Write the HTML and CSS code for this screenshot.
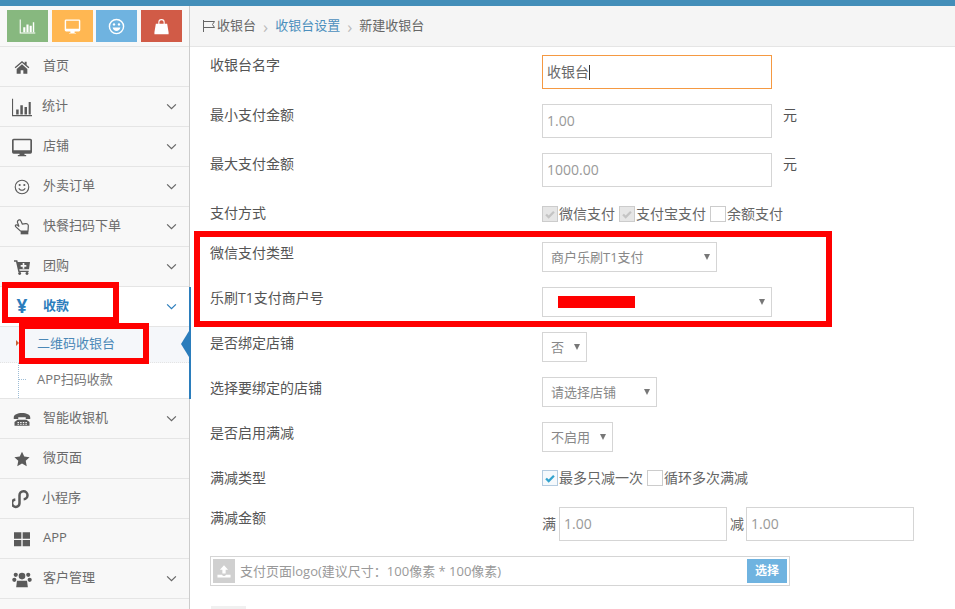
FILE: index.html
```html
<!DOCTYPE html>
<html lang="zh">
<head>
<meta charset="utf-8">
<title>新建收银台</title>
<link rel="stylesheet" href="styles.css">
</head>
<body>
<div class="topbar"></div>
<div class="layout">
  <aside class="sidebar">
    <div class="shortcuts">
      <span class="sc sc-green"><svg viewBox="0 0 24 24" class="sc-ic"><path d="M1 2v20h22v-1.500H2.500V2z"/><path d="M6 13h3v7H6zM10.500 9h3v11h-3zM15 11h3v9h-3zM19.500 6h2v14h-2z"/></svg></span>
      <span class="sc sc-orange"><svg viewBox="0 0 24 24" class="sc-ic"><path d="M3 2h18a2 2 0 0 1 2 2v13a2 2 0 0 1-2 2h-6v2h2v1H7v-1h2v-2H3a2 2 0 0 1-2-2V4a2 2 0 0 1 2-2zm0 2v11h18V4z"/></svg></span>
      <span class="sc sc-blue"><svg viewBox="0 0 24 24" class="sc-ic"><path fill-rule="evenodd" d="M12 1a11 11 0 1 1 0 22 11 11 0 0 1 0-22zm0 2a9 9 0 1 0 0 18 9 9 0 0 0 0-18z"/><circle cx="8.500" cy="9" r="1.700"/><circle cx="15.500" cy="9" r="1.700"/><path d="M6.500 13.500h11c-.5 3-3 4.800-5.500 4.800s-5-1.800-5.500-4.800z"/></svg></span>
      <span class="sc sc-red"><svg viewBox="0 0 24 24" class="sc-ic"><path fill-rule="evenodd" d="M7.500 8V6a4.500 4.500 0 0 1 9 0v2H20l2 12v3H2v-3L4 8zm1.500 0h6V6a3 3 0 0 0-6 0z"/></svg></span>
    </div>
    <nav>
      <a class="item"><svg class="ic ic-s" viewBox="0 0 24 24"><path d="M12 3 1 12.500l1.300 1.500L12 5.700l9.700 8.300 1.300-1.500-4-3.500V4h-3v2.400zM4 15v7h6v-5h4v5h6v-7l-8-7z"/></svg><span class="lbl">首页</span></a>
      <a class="item"><svg class="ic" viewBox="0 0 24 24"><path d="M0 2h1.300v19.500H24V23H0z"/><path d="M5 15h3v6H5zM10 10h3v11h-3zM15 12h3v9h-3zM20 6h2.500v15H20z"/></svg><span class="lbl lbl-tight">统计</span><svg class="chev" viewBox="0 0 12 8"><path d="m1 1.500 5 5 5-5"/></svg></a>
      <a class="item"><svg class="ic" viewBox="0 0 24 24"><path fill-rule="evenodd" d="M2 2h20a2 2 0 0 1 2 2v14a2 2 0 0 1-2 2h-7v1.500h2V23H7v-1.500h2V20H2a2 2 0 0 1-2-2V4a2 2 0 0 1 2-2zm0 2v12h20V4z"/></svg><span class="lbl">店铺</span><svg class="chev" viewBox="0 0 12 8"><path d="m1 1.500 5 5 5-5"/></svg></a>
      <a class="item"><svg class="ic ic-s" viewBox="0 0 24 24"><path fill-rule="evenodd" d="M12 1a11 11 0 1 1 0 22 11 11 0 0 1 0-22zm0 1.700a9.300 9.300 0 1 0 0 18.600 9.300 9.300 0 0 0 0-18.600z"/><circle cx="8.500" cy="9" r="1.600"/><circle cx="15.500" cy="9" r="1.600"/><path d="M6.500 14.200l1.500-.7c.8 1.600 2.400 2.500 4 2.500s3.200-.9 4-2.500l1.500.7c-1 2.300-3.200 3.600-5.500 3.600s-4.500-1.300-5.500-3.600z"/></svg><span class="lbl">外卖订单</span><svg class="chev" viewBox="0 0 12 8"><path d="m1 1.500 5 5 5-5"/></svg></a>
      <a class="item"><svg class="ic ic-s" viewBox="0 0 24 24"><path class="hand" d="M7 1.500c1.300-.8 2.700 0 3.200 1.200l2.300 4.800 5-.5c2.300-.2 4 1 4 3.200l-.5 7.800H9.500L2.500 11.500c-.8-1-.5-2 .2-2.500s1.800-.3 2.800.5l2 1.800-2.300-6.300C4.800 3.500 5.800 2.300 7 1.500z"/><path d="M10 18h11.500v5H10z"/></svg><span class="lbl">快餐扫码下单</span><svg class="chev" viewBox="0 0 12 8"><path d="m1 1.500 5 5 5-5"/></svg></a>
      <a class="item"><svg class="ic ic-s" viewBox="0 0 24 24"><path fill-rule="evenodd" d="M0 2h5l.7 2.500H24l-1.500 11H8l.4 2H22v2H6.500L3 4H0zm13 4v3h-3v2.500h3v3h2.500v-3h3V9h-3V6z"/><circle cx="8.500" cy="21.700" r="2.200"/><circle cx="19.500" cy="21.700" r="2.200"/></svg><span class="lbl">团购</span><svg class="chev" viewBox="0 0 12 8"><path d="m1 1.500 5 5 5-5"/></svg></a>
      <a class="item active"><span class="yen">¥</span><span class="lbl">收款</span><svg class="chev" viewBox="0 0 12 8"><path d="m1 1.500 5 5 5-5"/></svg></a>
      <div class="sub">
        <a class="sub-item current">二维码收银台</a>
        <a class="sub-item last">APP扫码收款</a>
      </div>
      <a class="item"><svg class="ic ic-m" viewBox="0 0 24 24"><path d="M1 10c0-4 5-6 11-6s11 2 11 6v2h-6V9.500H7V12H1z"/><path fill-rule="evenodd" d="M6 13h12l4 3v5H2v-5zm0 3v1.500h2V16zm3.500 0v1.500h2V16zm3.500 0v1.500h2V16zm3.500 0v1.500h2V16zM6 19v1h2v-1zm3.500 0v1h2v-1zm3.500 0v1h2v-1zm3.500 0v1h2v-1z"/></svg><span class="lbl">智能收银机</span><svg class="chev" viewBox="0 0 12 8"><path d="m1 1.500 5 5 5-5"/></svg></a>
      <a class="item"><svg class="ic ic-s" viewBox="0 0 24 24"><path d="m12 1 3.400 7.300 8 1-5.800 5.500 1.500 8L12 18.600l-7.100 4.200 1.500-8L.6 9.300l8-1z"/></svg><span class="lbl">微页面</span></a>
      <a class="item"><svg class="ic ic-line" viewBox="0 0 24 24"><path d="M9 11v6a4.500 4.500 0 1 1-5-4.500M9 12V7.500a4.800 4.800 0 1 1 5 4.800"/></svg><span class="lbl lbl-tight">小程序</span></a>
      <a class="item"><svg class="ic ic-s" viewBox="0 0 24 24"><path d="M0 2h11v9.500H0zM13 2h11v9.500H13zM0 13.500h11V23H0zM13 13.500h11V23H13z"/></svg><span class="lbl">APP</span></a>
      <a class="item"><svg class="ic" viewBox="0 0 24 24"><circle cx="12" cy="8.500" r="4"/><circle cx="4.500" cy="7" r="2.500"/><circle cx="19.500" cy="7" r="2.500"/><circle cx="2.800" cy="13" r="2.500"/><circle cx="21.200" cy="13" r="2.500"/><path d="M6 14h12l1 8H5z"/></svg><span class="lbl">客户管理</span><svg class="chev" viewBox="0 0 12 8"><path d="m1 1.500 5 5 5-5"/></svg></a>
    </nav>
  </aside>
  <main class="main">
    <div class="crumbs">
      <svg class="flag" viewBox="0 0 14 14"><path d="M1.500 1v12M1.500 2.500h11l-2 3 2 3h-11"/></svg>
      <span>收银台</span><span class="sep">›</span><a class="link">收银台设置</a><span class="sep">›</span><span>新建收银台</span>
    </div>
    <form class="form">
      <div class="row r1"><label>收银台名字</label><div class="ctl"><span class="input focus">收银台<i class="caret"></i></span></div></div>
      <div class="row r2"><label>最小支付金额</label><div class="ctl"><span class="input ph">1.00</span><span class="unit">元</span></div></div>
      <div class="row r3"><label>最大支付金额</label><div class="ctl"><span class="input ph">1000.00</span><span class="unit">元</span></div></div>
      <div class="row r4"><label>支付方式</label><div class="ctl checks">
        <span class="cb off"><svg viewBox="0 0 16 16"><path d="m3.500 8.500 3 3 6-6"/></svg></span><span class="ct">微信支付</span>
        <span class="cb off"><svg viewBox="0 0 16 16"><path d="m3.500 8.500 3 3 6-6"/></svg></span><span class="ct">支付宝支付</span>
        <span class="cb"></span><span class="ct">余额支付</span>
      </div></div>
      <div class="row r5"><label>微信支付类型</label><div class="ctl"><span class="select w175">商户乐刷T1支付</span></div></div>
      <div class="row r5"><label>乐刷T1支付商户号</label><div class="ctl"><span class="select w230"><i class="redact"></i></span></div></div>
      <div class="row r5"><label>是否绑定店铺</label><div class="ctl"><span class="select w45">否</span></div></div>
      <div class="row r5"><label>选择要绑定的店铺</label><div class="ctl"><span class="select w115">请选择店铺</span></div></div>
      <div class="row r5"><label>是否启用满减</label><div class="ctl"><span class="select w71">不启用</span></div></div>
      <div class="row r10"><label>满减类型</label><div class="ctl checks">
        <span class="cb on"><svg viewBox="0 0 16 16"><path d="m3.500 8.500 3 3 6-6"/></svg></span><span class="ct">最多只减一次</span>
        <span class="cb"></span><span class="ct">循环多次满减</span>
      </div></div>
      <div class="row r11"><label>满减金额</label><div class="ctl amount"><span class="ct">满</span><span class="input ph w168">1.00</span><span class="ct">减</span><span class="input ph w168">1.00</span></div></div>
      <div class="upload">
        <span class="up-ic"><svg viewBox="0 0 22 22"><path d="M11 4l5 5.500h-3V14H9V9.500H6zM3 15.500h5.500c.5 1 1.500 1.500 2.500 1.500s2-.5 2.500-1.500H19V19H3z"/></svg></span>
        <span class="up-text">支付页面logo(建议尺寸<i class="colon">：</i>100像素 * 100像素)</span>
        <span class="up-btn">选择</span>
      </div>
      <div class="stub"></div>
    </form>
  </main>
</div>
<div class="mark mark-a"></div>
<div class="mark mark-b"></div>
<div class="mark mark-c"></div>
</body>
</html>
```
FILE: styles.css
```css
* { box-sizing: border-box; }
html, body { margin: 0; height: 609px; overflow: hidden; }
body { font: 13px/1.5 "Open Sans", "Noto Sans CJK SC", sans-serif; color: #666; background: #fff; position: relative; }
a { color: inherit; text-decoration: none; }
i { font-style: normal; }
.topbar { height: 6px; background: #438eb9; }
.layout { display: flex; height: 603px; }

.sidebar { width: 190px; flex: none; background: #f8f8f8; border-right: 1px solid #ccc; position: relative; z-index: 1; }
.shortcuts { height: 41px; padding: 4px 0 0 7px; display: flex; gap: 3.600px; border-bottom: 1px solid #e5e5e5; }
.sc { width: 41px; height: 32px; display: flex; align-items: center; justify-content: center; }
.sc-green { background: #87b87f; }
.sc-orange { background: #ffb752; }
.sc-blue { background: #6fb3e0; }
.sc-red { background: #d15b47; }
.sc-ic { width: 17px; height: 17px; fill: #fff; }

.item { height: 40px; display: flex; align-items: center; padding-left: 12px; border-bottom: 1px solid #e5e5e5; position: relative; color: #585858; }
.ic { width: 20px; height: 20px; flex: none; fill: #5a5a5a; }
.ic-s { width: 16px; height: 16px; margin: 0 2px; }
.ic-m { width: 18px; height: 18px; margin: 0 1px; }
.ic-line { fill: none; stroke: #5a5a5a; stroke-width: 3; }
.hand { fill: none; stroke: #5a5a5a; stroke-width: 1.800; }
.lbl { margin: 0 0 2px 11px; color: #6b6b6b; }
.lbl-tight { margin-left: 10px; }
.chev { position: absolute; right: 12px; top: 16px; width: 11px; height: 7px; fill: none; stroke: #666; stroke-width: 1.400; }
.active { background: #fff; box-shadow: 2px 0 0 #2b7dbc; }
.active .lbl { color: #2b7dbc; font-weight: 700; }
.active .chev { stroke: #2b7dbc; }
.yen { width: 20px; text-align: center; font-size: 19px; font-weight: 700; color: #2b7dbc; line-height: 1; }
.sub { background: #fff; position: relative; border-bottom: 1px solid #e5e5e5; box-shadow: 2px 0 0 #2b7dbc; }
.sub::before { content: ""; position: absolute; left: 18px; top: 0; bottom: 0; border-left: 1px dotted #9dbdd6; }
.sub-item { display: flex; align-items: center; height: 36px; padding: 0 0 2px 37px; color: #777; position: relative; }
.sub-item::before { content: ""; position: absolute; left: 19px; top: 16px; width: 7px; border-top: 1px dotted #9dbdd6; }
.last { height: 35px; }
.current { background: #f5f7fa; color: #4b88b7; border-bottom: 1px dotted #e4e4e4; }
.current::before { left: 16px; top: 13px; width: 0; border: 3px solid transparent; border-left-color: #c86139; border-right: 0; }
.current::after { content: ""; position: absolute; right: 0; top: 4px; border: 13px solid transparent; border-left: 0; border-right-width: 8px; border-right-color: #2b7dbc; }

.main { flex: 1; min-width: 0; }
.crumbs { height: 41px; display: flex; align-items: center; padding-left: 12px; background: #f5f5f5; border-bottom: 1px solid #e5e5e5; color: #666; }
.flag { width: 14px; height: 14px; fill: none; stroke: #666; margin-right: 1px; }
.sep { margin: 0 7px; color: #bbb; font-size: 17px; line-height: 1; }
.link { color: #4c8fbd; }
.form { padding: 8px 0 0 20px; }
.row { display: flex; }
.row label { width: 332px; flex: none; color: #555; font-size: 14px; line-height: 20px; padding-top: 1px; }
.ctl { display: flex; align-items: flex-start; }
.r1, .r2, .r11 { height: 49px; }
.r1 label, .r4 label { padding-top: 0; }
.r3 { height: 50px; }
.r4 { height: 39px; }
.r5 { height: 45px; }
.r10 { height: 40px; }
.input { display: block; width: 230px; height: 34px; border: 1px solid #d5d5d5; padding: 0 4px; line-height: 32px; font-size: 14px; color: #858585; }
.focus { border-color: #f59942; color: #696969; }
.caret { display: inline-block; width: 1px; height: 15px; background: #333; vertical-align: -3px; }
.ph { color: #999; }
.unit { margin-left: 11px; color: #555; font-size: 14px; line-height: 20px; padding-top: 1px; }
.select { display: block; position: relative; height: 30px; border: 1px solid #d5d5d5; padding: 0 8px; line-height: 28px; color: #888; }
.select::after { content: ""; position: absolute; right: 6px; top: 11px; border: 3px solid transparent; border-top: 6px solid #777; border-bottom: 0; }
.w175 { width: 175px; }
.w230 { width: 230px; }
.w45 { width: 45px; }
.w115 { width: 115px; }
.w71 { width: 71px; }
.w168 { width: 168px; }
.redact { position: absolute; left: 15px; top: 8px; width: 77px; height: 12px; background: #f00; }
.checks { align-items: center; height: 16px; margin-top: 3px; }
.cb { width: 16px; height: 16px; border: 1px solid #ccc; background: #fff; display: block; flex: none; }
.cb svg { display: block; width: 14px; height: 14px; fill: none; stroke-width: 2.600; }
.off { background: #e6e6e6; }
.off svg { stroke: #c4c4c4; }
.on { border-color: #b3cbe0; background: #f5f9fc; }
.on svg { stroke: #32a3ce; }
.ct { margin: 0 4px 0 1px; color: #666; font-size: 14px; line-height: 20px; }
.amount { align-items: center; height: 34px; }
.amount .ct { margin: 0 3px 0 0; }
.amount .input + .ct { margin: 0 2px 0 3px; }
.upload { width: 580px; height: 30px; border: 1px solid #d5d5d5; display: flex; align-items: center; padding: 2px; position: relative; }
.up-ic { width: 22px; height: 24px; background: #d0d0d0; display: flex; align-items: center; justify-content: center; }
.up-ic svg { width: 18px; height: 18px; fill: #fff; }
.up-text { margin-left: 5px; color: #999; }
.colon { font-family: "Noto Sans CJK TC", sans-serif; }
.up-btn { margin-left: auto; width: 40px; height: 24px; background: #6fb3e0; color: #fff; font-size: 12px; font-weight: 700; text-align: center; line-height: 24px; }
.stub { width: 35px; height: 10px; margin: 20px 0 0 1px; background: #f0f0f0; }

.mark { position: absolute; z-index: 2; border: 6px solid #f00; }
.mark-a { left: 2px; top: 282px; width: 117px; height: 41px; }
.mark-b { left: 19px; top: 323px; width: 130px; height: 41px; }
.mark-c { left: 194px; top: 231px; width: 638px; height: 96px; }
```
